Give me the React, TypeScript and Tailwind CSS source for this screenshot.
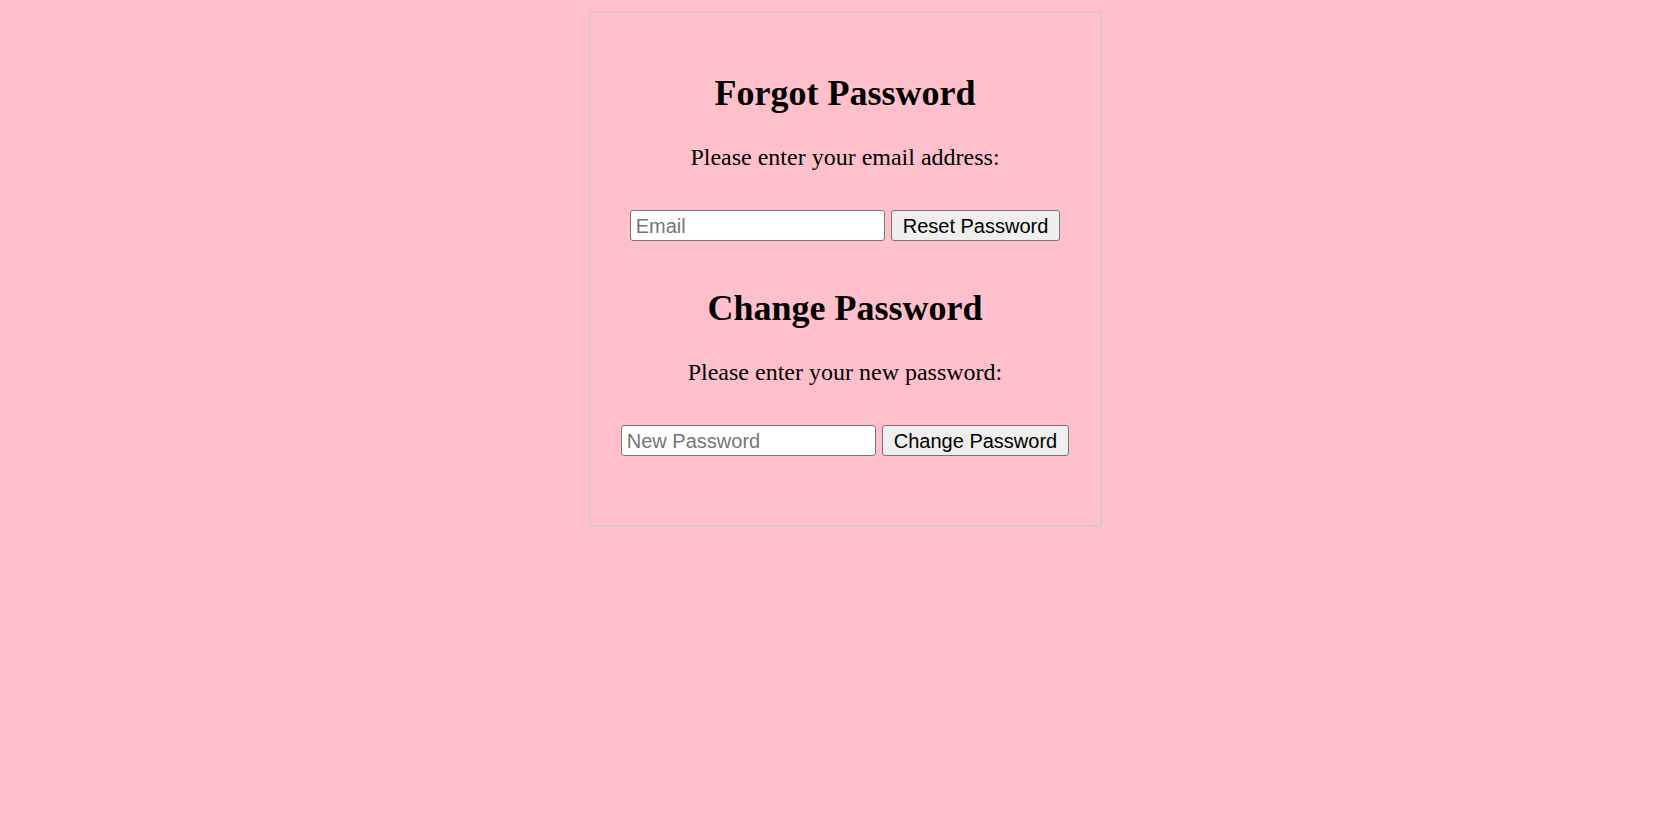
import React from 'react';

const serif = "font-['Liberation_Serif','Times_New_Roman',serif]";
const sans = "font-['Liberation_Sans',Arial,sans-serif]";

const App: React.FC = () => {
  return (
    <div className={`min-h-screen w-full bg-[#ffc0cb] pt-[11px] pl-[16px] flex justify-center items-start ${serif}`}>
      <div className="w-[513px] border-2 border-[#dcc6ca] text-center text-black pt-[60px] pb-[69px]">
        {/* Forgot Password */}
        <h2 className="text-[36px] leading-[41px] font-bold">Forgot Password</h2>
        <p className="mt-[29px] text-[24px] leading-[28px]">Please enter your email address:</p>
        <div className="mt-[39px] flex justify-center items-stretch gap-[6px] h-[31px]">
          <input
            type="email"
            placeholder="Email"
            className={`w-[255px] bg-white border border-[#767676] rounded-[3px] px-[5px] text-[20px] text-black placeholder:text-[#757575] outline-none ${sans}`}
          />
          <button className={`bg-[#efefef] border border-[#767676] rounded-[3px] px-[11px] text-[20px] text-black leading-none ${sans}`}>
            Reset Password
          </button>
        </div>

        {/* Change Password */}
        <h2 className="mt-[47px] text-[36px] leading-[41px] font-bold">Change Password</h2>
        <p className="mt-[29px] text-[24px] leading-[28px]">Please enter your new password:</p>
        <div className="mt-[39px] flex justify-center items-stretch gap-[6px] h-[31px]">
          <input
            type="password"
            placeholder="New Password"
            className={`w-[255px] bg-white border border-[#767676] rounded-[3px] px-[5px] text-[20px] text-black placeholder:text-[#757575] outline-none ${sans}`}
          />
          <button className={`bg-[#efefef] border border-[#767676] rounded-[3px] px-[11px] text-[20px] text-black leading-none ${sans}`}>
            Change Password
          </button>
        </div>
      </div>
    </div>
  );
};

export default App;
